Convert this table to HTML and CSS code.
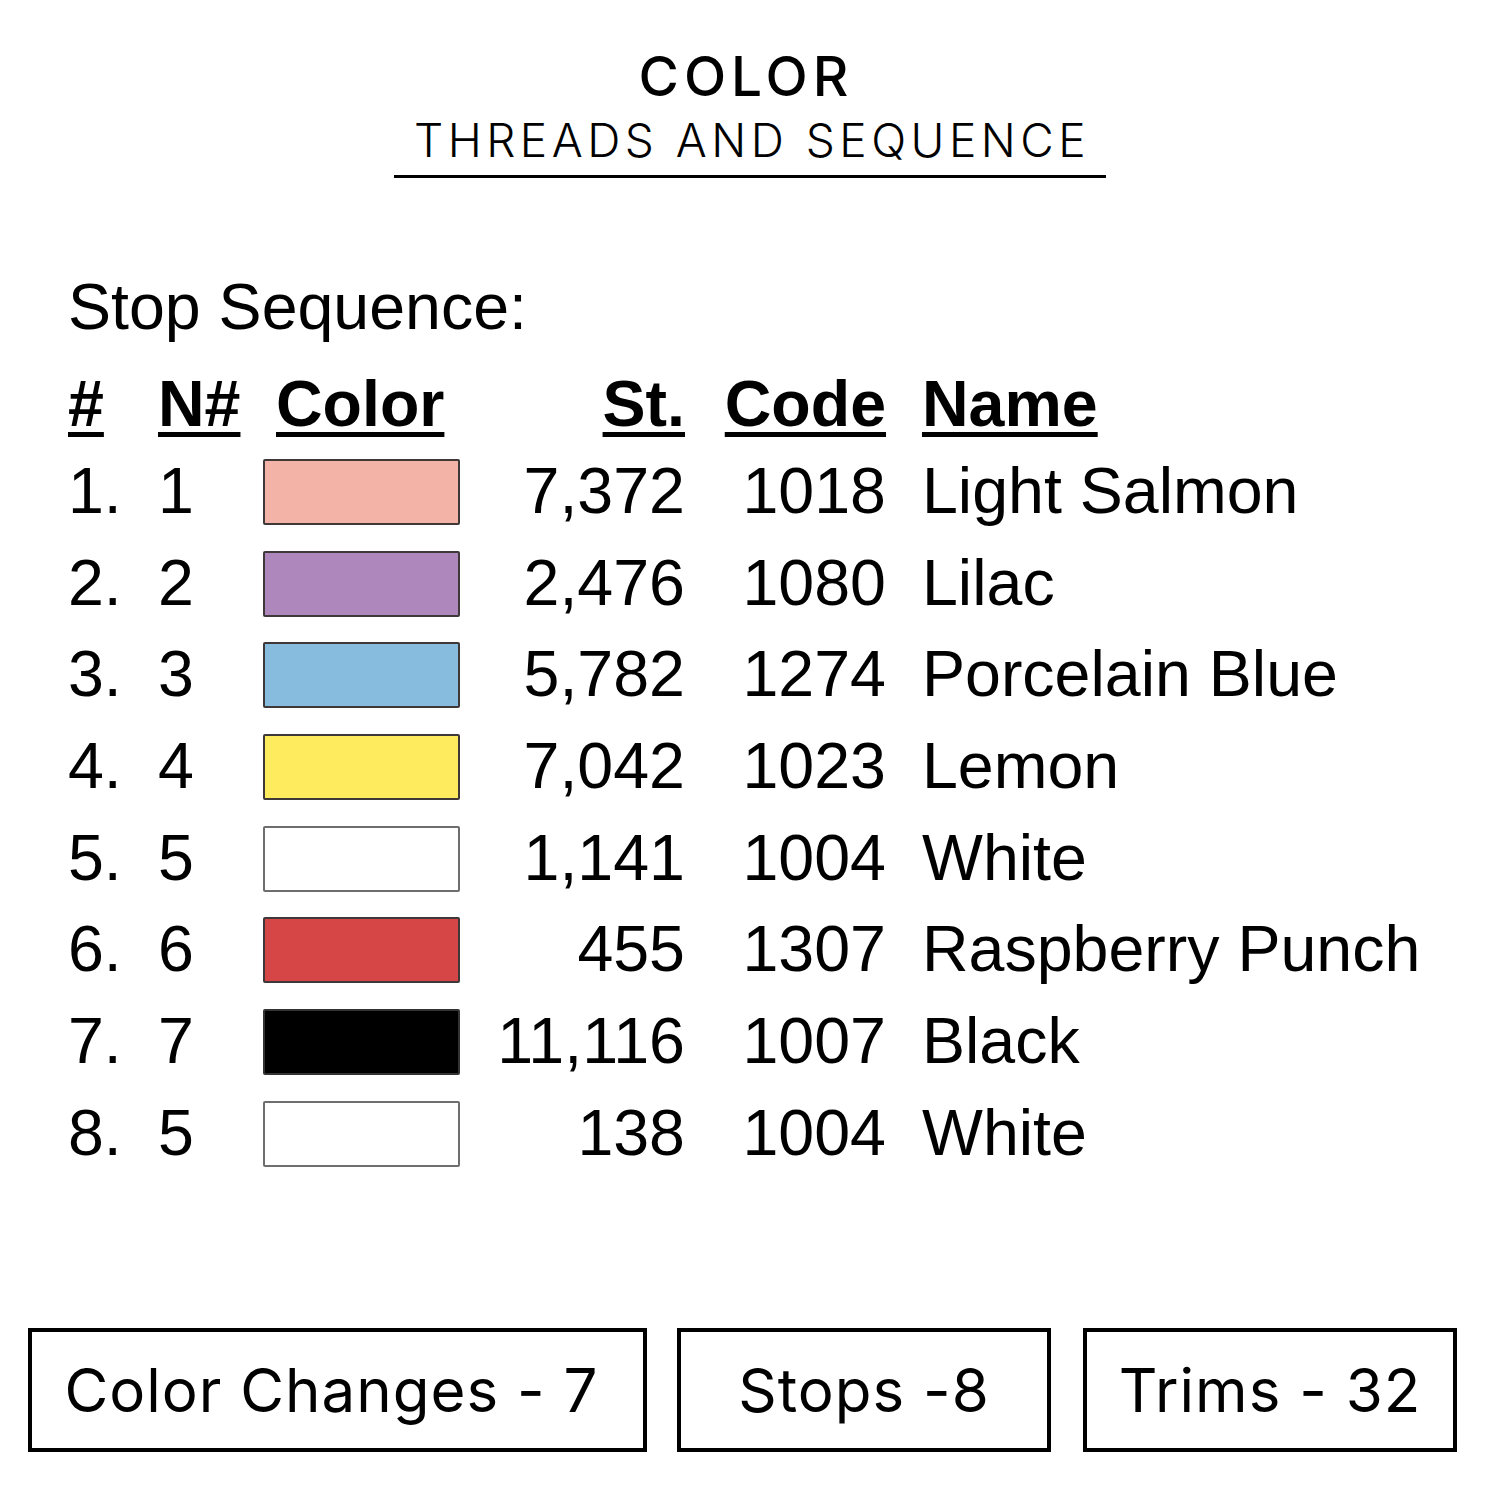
FILE: index.html
```html
<!DOCTYPE html>
<html>
<head>
<meta charset="utf-8">
<link rel="stylesheet" href="styles.css">
</head>
<body>
<div class="page">
  <header class="heading">
    <div class="title">COLOR</div>
    <div class="subtitle">THREADS AND SEQUENCE</div>
  </header>

  <section class="sequence">
    <div class="seq-title">Stop Sequence:</div>
    <div class="row head">
      <span class="c-num"><u>#</u></span>
      <span class="c-n"><u>N#</u></span>
      <span class="c-color"><u>Color</u></span>
      <span class="c-st"><u>St.</u></span>
      <span class="c-code"><u>Code</u></span>
      <span class="c-name"><u>Name</u></span>
    </div>
    <div class="row">
      <span class="c-num">1.</span><span class="c-n">1</span>
      <span class="c-color"><i class="swatch salmon"></i></span>
      <span class="c-st">7,372</span><span class="c-code">1018</span><span class="c-name">Light Salmon</span>
    </div>
    <div class="row">
      <span class="c-num">2.</span><span class="c-n">2</span>
      <span class="c-color"><i class="swatch lilac"></i></span>
      <span class="c-st">2,476</span><span class="c-code">1080</span><span class="c-name">Lilac</span>
    </div>
    <div class="row">
      <span class="c-num">3.</span><span class="c-n">3</span>
      <span class="c-color"><i class="swatch blue"></i></span>
      <span class="c-st">5,782</span><span class="c-code">1274</span><span class="c-name">Porcelain Blue</span>
    </div>
    <div class="row">
      <span class="c-num">4.</span><span class="c-n">4</span>
      <span class="c-color"><i class="swatch lemon"></i></span>
      <span class="c-st">7,042</span><span class="c-code">1023</span><span class="c-name">Lemon</span>
    </div>
    <div class="row">
      <span class="c-num">5.</span><span class="c-n">5</span>
      <span class="c-color"><i class="swatch white"></i></span>
      <span class="c-st">1,141</span><span class="c-code">1004</span><span class="c-name">White</span>
    </div>
    <div class="row">
      <span class="c-num">6.</span><span class="c-n">6</span>
      <span class="c-color"><i class="swatch raspberry"></i></span>
      <span class="c-st">455</span><span class="c-code">1307</span><span class="c-name">Raspberry Punch</span>
    </div>
    <div class="row">
      <span class="c-num">7.</span><span class="c-n">7</span>
      <span class="c-color"><i class="swatch black"></i></span>
      <span class="c-st">11,116</span><span class="c-code">1007</span><span class="c-name">Black</span>
    </div>
    <div class="row">
      <span class="c-num">8.</span><span class="c-n">5</span>
      <span class="c-color"><i class="swatch white"></i></span>
      <span class="c-st">138</span><span class="c-code">1004</span><span class="c-name">White</span>
    </div>
  </section>

  <footer class="stats">
    <div class="stat wide">Color Changes - 7</div>
    <div class="stat">Stops -8</div>
    <div class="stat">Trims - 32</div>
  </footer>
</div>
</body>
</html>
```

FILE: styles.css
```css
html, body {
  margin: 0;
  padding: 0;
  background: #ffffff;
}

.page {
  width: 1500px;
  height: 1500px;
  position: relative;
  color: #000;
  font-family: "Liberation Sans", Arial, sans-serif;
}

.heading {
  display: flex;
  flex-direction: column;
  align-items: center;
  padding-top: 49px;
  font-family: Inter, "Noto Sans", sans-serif;
}

.title {
  font-size: 55px;
  font-weight: 500;
  line-height: 1;
  letter-spacing: 5px;
  margin-right: 8px;
}

.subtitle {
  font-size: 46px;
  font-weight: 300;
  line-height: 1;
  letter-spacing: 4.5px;
  margin-top: 13px;
  padding: 0 16px 12px 20px;
  border-bottom: 3px solid #000;
}

.sequence {
  margin-top: 93px;
  padding-left: 68px;
  font-size: 64.5px;
}

.seq-title {
  line-height: 73px;
  margin-bottom: 18px;
}

.row {
  display: grid;
  grid-template-columns: 90px 105px 197px 225px 201px auto;
  height: 91.7px;
  line-height: 91.7px;
  align-items: center;
  white-space: nowrap;
}

.row.head {
  height: 84px;
  line-height: 84px;
  font-weight: bold;
}

.row.head u {
  text-decoration-thickness: 5px;
  text-underline-offset: 6px;
}

.row.head .c-color {
  padding-left: 13px;
}

.c-st, .c-code {
  text-align: right;
}

.c-name {
  padding-left: 36px;
}

.c-color {
  display: flex;
  align-items: center;
  height: 100%;
}

.swatch {
  display: block;
  box-sizing: border-box;
  width: 198px;
  height: 66px;
  border: 2px solid #3f3838;
  border-radius: 2px;
}

.salmon { background: #f3b3a6; }
.lilac { background: #ae87bd; }
.blue { background: #88bcdf; }
.lemon { background: #ffec5e; }
.white { background: #ffffff; border-color: #6e6e6e; }
.raspberry { background: #d64646; }
.black { background: #000000; border-color: #333; }

.stats {
  display: flex;
  gap: 30px;
  margin-top: 148px;
  padding-left: 28px;
  font-family: Inter, "Noto Sans", sans-serif;
}

.stat {
  box-sizing: border-box;
  width: 374px;
  height: 124px;
  border: 4px solid #000;
  display: flex;
  align-items: center;
  justify-content: center;
  font-size: 60px;
  font-weight: 400;
  letter-spacing: 1px;
}

.stat.wide {
  width: 619px;
  padding-right: 12px;
}

.stat:last-child {
  margin-left: 2px;
}
```
